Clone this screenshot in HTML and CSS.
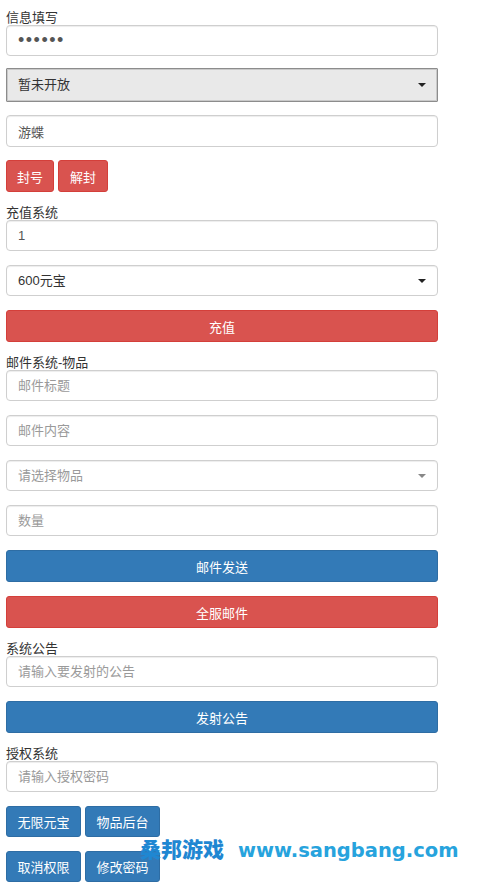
FILE: index.html
```html
<!DOCTYPE html>
<html lang="zh-CN">
<head>
<meta charset="utf-8">
<title>管理后台</title>
<link rel="stylesheet" href="styles.css">
</head>
<body>
<div class="page">
  <div class="label">信息填写</div>
  <input class="field f-first" type="password" value="123456">
  <div class="select select-gray">暂未开放</div>
  <input class="field f-third" type="text" value="游蝶">
  <div class="btn-row">
    <button class="btn btn-red btn-sm">封号</button>
    <button class="btn btn-red btn-sm">解封</button>
  </div>

  <div class="label">充值系统</div>
  <input class="field" type="text" value="1">
  <div class="select select-white">600元宝</div>
  <button class="btn btn-red btn-block">充值</button>

  <div class="label">邮件系统-物品</div>
  <input class="field" type="text" placeholder="邮件标题">
  <input class="field" type="text" placeholder="邮件内容">
  <div class="select select-white select-placeholder">请选择物品</div>
  <input class="field" type="text" placeholder="数量">
  <button class="btn btn-blue btn-block">邮件发送</button>
  <button class="btn btn-red btn-block">全服邮件</button>

  <div class="label">系统公告</div>
  <input class="field" type="text" placeholder="请输入要发射的公告">
  <button class="btn btn-blue btn-block">发射公告</button>

  <div class="label">授权系统</div>
  <input class="field" type="text" placeholder="请输入授权密码">
  <div class="btn-row">
    <button class="btn btn-blue btn-md">无限元宝</button>
    <button class="btn btn-blue btn-md">物品后台</button>
  </div>
  <div class="btn-row last">
    <button class="btn btn-blue btn-md">取消权限</button>
    <button class="btn btn-blue btn-md">修改密码</button>
  </div>

  <div class="watermark">
    <span class="wm-cn">桑邦游戏</span>
    <span class="wm-url">www.sangbang.com</span>
  </div>
</div>
</body>
</html>
```

FILE: styles.css
```css
html, body {
  margin: 0;
  padding: 0;
  background: #fff;
}

body {
  font-family: "Liberation Sans", "Noto Sans CJK SC", sans-serif;
  font-size: 13px;
  color: #333;
}

.page {
  position: relative;
  width: 432px;
  padding: 11px 0 0 6px;
}

.label {
  height: 14px;
  line-height: 14px;
  font-size: 13px;
  color: #333;
  white-space: nowrap;
}

.field {
  display: block;
  box-sizing: border-box;
  width: 100%;
  height: 31px;
  margin: 0 0 14px;
  padding: 0 11px;
  border: 1px solid #cfcfcf;
  border-radius: 4px;
  box-shadow: inset 0 1px 1px rgba(0, 0, 0, 0.075);
  background: #fff;
  font-family: "Liberation Sans", "Noto Sans CJK SC", sans-serif;
  font-size: 13px;
  color: #555;
  outline: none;
}

.field::placeholder {
  color: #9a9a9a;
}

.f-first {
  margin-bottom: 12px;
  font-size: 18px;
  letter-spacing: 1.5px;
}

.f-third {
  height: 32px;
  margin-bottom: 13px;
}

.select {
  position: relative;
  box-sizing: border-box;
  width: 100%;
  height: 31px;
  line-height: 29px;
  margin: 0 0 14px;
  padding: 0 11px;
  border: 1px solid #cfcfcf;
  border-radius: 4px;
  box-shadow: inset 0 1px 1px rgba(0, 0, 0, 0.075);
  background: #fff;
  color: #333;
  font-size: 13px;
}

.select::after {
  content: "";
  position: absolute;
  right: 11px;
  top: 50%;
  margin-top: -2px;
  border-left: 4px solid transparent;
  border-right: 4px solid transparent;
  border-top: 4px solid #222;
}

.select-gray {
  height: 34px;
  line-height: 32px;
  margin-bottom: 13px;
  border: 1px solid #8c8c8c;
  border-radius: 1px;
  box-shadow: inset 0 0 0 1px #c9c9c9;
  background: #e9e9e9;
}

.select-placeholder {
  color: #9a9a9a;
}

.select-placeholder::after {
  border-top-color: #888;
}

.btn-row {
  display: flex;
  gap: 4px;
  margin-bottom: 14px;
}

.btn-row.last {
  margin-bottom: 0;
}

.btn {
  box-sizing: border-box;
  height: 32px;
  border: 1px solid transparent;
  border-radius: 3px;
  color: #fff;
  font-family: "Liberation Sans", "Noto Sans CJK SC", sans-serif;
  font-size: 13px;
  cursor: pointer;
}

.btn-red {
  background: #d9534f;
  border-color: #d43f3a;
}

.btn-blue {
  background: #337ab7;
  border-color: #2e6da4;
}

.btn-sm {
  padding: 0 10px;
}

.btn-sm + .btn-sm {
  padding: 0 11px;
}

.btn-md {
  width: 75px;
  height: 31px;
  padding: 0;
}

.btn-block {
  display: block;
  width: 100%;
  margin-bottom: 14px;
}

.watermark {
  position: absolute;
  left: 140px;
  top: 833px;
  display: flex;
  align-items: baseline;
  gap: 14px;
  white-space: nowrap;
}

.wm-cn {
  font-family: "Noto Sans CJK SC", sans-serif;
  font-weight: 900;
  font-size: 21px;
  color: #1f87d2;
}

.wm-url {
  font-family: "DejaVu Sans", sans-serif;
  font-weight: bold;
  font-size: 19.5px;
  color: #27a3dd;
}
```
